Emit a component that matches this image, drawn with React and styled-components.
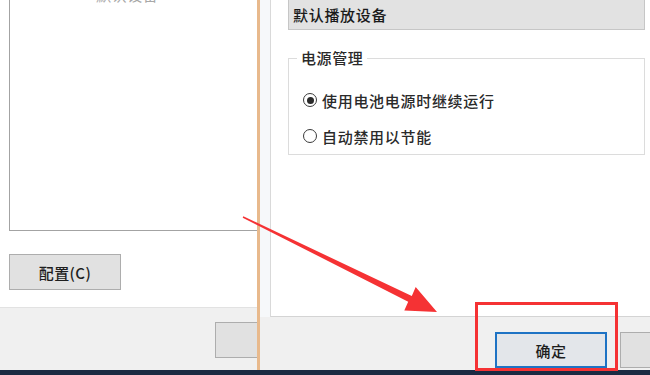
import React from "react";
import styled, { createGlobalStyle } from "styled-components";

const Global = createGlobalStyle`
  html, body { margin: 0; padding: 0; background: #fff; }
  body { font-family: "Noto Sans CJK SC", "Noto Sans", sans-serif; }
`;

const Screen = styled.div`
  position: relative;
  width: 650px;
  height: 375px;
  overflow: hidden;
  display: flex;
  flex-direction: column;
  font-family: "Noto Sans CJK SC", "Noto Sans", sans-serif;
  font-weight: 500;
  color: #1e1e1e;
`;

const Desktop = styled.div`
  display: flex;
  height: 370px;
  flex-shrink: 0;
`;

const Taskbar = styled.div`
  flex: 1;
  background: #1b2a42;
`;

const LeftWindow = styled.div`
  flex: 0 0 257px;
  display: flex;
  flex-direction: column;
  overflow: hidden;
  background: #fff;
`;

const LeftBody = styled.div`
  height: 307px;
  padding-left: 9px;
  display: flex;
  flex-direction: column;
  align-items: flex-start;
`;

const ListBox = styled.div`
  margin-top: -20px;
  width: 320px;
  height: 251px;
  box-sizing: border-box;
  border: 1px solid #a3a3a3;
  padding-left: 86px;
  flex-shrink: 0;
`;

const FaintText = styled.div`
  font-size: 15px;
  line-height: 20px;
  letter-spacing: 0.6px;
  font-weight: 400;
  color: #a8a8a8;
  margin-top: 4px;
`;

const WinButton = styled.div`
  box-sizing: border-box;
  width: ${(p) => p.$w || 112}px;
  height: ${(p) => p.$h || 36}px;
  flex-shrink: 0;
  background: ${(p) => (p.$primary ? "#e3e6ea" : "#e1e1e1")};
  border: ${(p) => (p.$primary ? "2px solid #1e73c4" : "1px solid #adadad")};
  display: flex;
  align-items: center;
  justify-content: center;
  font-size: 15px;
  letter-spacing: 0.4px;
  color: #1e1e1e;
`;

const ConfigButton = styled(WinButton)`
  margin-top: 23px;
`;

const LeftFooter = styled.div`
  flex: 1;
  background: #f0f0f0;
  border-top: 1px solid #e2e2e2;
  padding: 14px 0 0 215px;
  display: flex;
`;

const RightWindow = styled.div`
  flex: 1;
  min-width: 0;
  overflow: hidden;
  display: flex;
  flex-direction: column;
  border-left: 3px solid #e8b98c;
  background: #f2f3f4;
`;

const TabArea = styled.div`
  height: 317px;
  flex-shrink: 0;
  padding-left: 10px;
  display: flex;
  box-sizing: border-box;
  background: #f6f8fa;
`;

const TabPage = styled.div`
  flex: 1;
  min-width: 0;
  background: #fff;
  border-left: 1px solid #d9d9d9;
  border-bottom: 1px solid #d4d4d4;
  padding: 0 5px 0 17px;
  display: flex;
  flex-direction: column;
`;

const DeviceBar = styled.div`
  height: 30px;
  box-sizing: border-box;
  background: #e2e2e2;
  border: 1px solid #c6c6c6;
  border-top: none;
  padding-left: 4px;
  display: flex;
  align-items: center;
  font-size: 15px;
  letter-spacing: 0.7px;
  color: #1a1a1a;
`;

const GroupBox = styled.fieldset`
  margin: 18px 0 0 0;
  padding: 0 0 7px 14px;
  border: 1px solid #dcdcdc;
  min-width: 0;
`;

const Legend = styled.legend`
  margin-left: -6px;
  padding: 0 4px;
  font-size: 15px;
  line-height: 20px;
  letter-spacing: 0.6px;
  color: #2a2a2a;
`;

const RadioList = styled.div`
  padding-top: 21px;
  display: flex;
  flex-direction: column;
  gap: 14px;
`;

const RadioRow = styled.div`
  height: 22px;
  display: flex;
  align-items: center;
  gap: 5px;
  font-size: 15px;
  letter-spacing: 0.7px;
  color: #2a2a2a;
`;

const RadioCircle = styled.span`
  width: 14px;
  height: 14px;
  box-sizing: border-box;
  border-radius: 50%;
  border: 1.5px solid #3a3a3a;
  display: flex;
  align-items: center;
  justify-content: center;
  &::after {
    content: "";
    width: 7px;
    height: 7px;
    border-radius: 50%;
    background: ${(p) => (p.$checked ? "#2a2a2a" : "transparent")};
  }
`;

const RightFooter = styled.div`
  flex: 1;
  display: flex;
  gap: 13px;
  padding: 15px 0 0 235px;
  background: #f0f0f0;
`;

const Highlight = styled.div`
  position: absolute;
  left: 475px;
  top: 302px;
  width: 143px;
  height: 69px;
  box-sizing: border-box;
  border: 3px solid #f53234;
  pointer-events: none;
`;

const ArrowSvg = styled.svg`
  position: absolute;
  left: 0;
  top: 0;
  pointer-events: none;
`;

export default function App() {
  return (
    <>
      <Global />
      <Screen>
        <Desktop>
          <LeftWindow>
            <LeftBody>
              <ListBox>
                <FaintText>默认设备</FaintText>
              </ListBox>
              <ConfigButton>配置(C)</ConfigButton>
            </LeftBody>
            <LeftFooter>
              <WinButton $w={100} />
            </LeftFooter>
          </LeftWindow>
          <RightWindow>
            <TabArea>
              <TabPage>
                <DeviceBar>默认播放设备</DeviceBar>
                <GroupBox>
                  <Legend>电源管理</Legend>
                  <RadioList>
                    <RadioRow>
                      <RadioCircle $checked />
                      使用电池电源时继续运行
                    </RadioRow>
                    <RadioRow>
                      <RadioCircle />
                      自动禁用以节能
                    </RadioRow>
                  </RadioList>
                </GroupBox>
              </TabPage>
            </TabArea>
            <RightFooter>
              <WinButton $primary $w={112}>确定</WinButton>
              <WinButton $w={100} />
            </RightFooter>
          </RightWindow>
        </Desktop>
        <Taskbar />
        <Highlight />
        <ArrowSvg width="650" height="375" viewBox="0 0 650 375">
          <polygon
            points="242.7,217.7 243.3,216.3 411.8,295.9 415.7,287.1 437,312 404.3,310.5 408.2,301.7"
            fill="#f53234"
          />
        </ArrowSvg>
      </Screen>
    </>
  );
}
